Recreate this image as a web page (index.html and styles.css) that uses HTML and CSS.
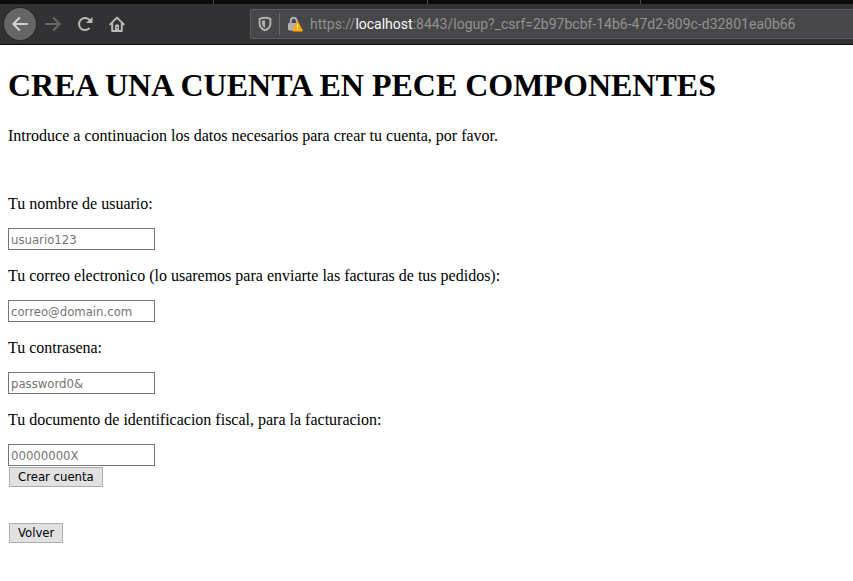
FILE: index.html
```html
<!DOCTYPE html>
<html lang="es">
<head>
<meta charset="utf-8">
<title>Crea una cuenta</title>
<link rel="stylesheet" href="styles.css">
</head>
<body>
<header class="browser">
  <div class="tabs"><span class="tab"></span><span class="tab"></span><span class="tab"></span><span class="tab"></span></div>
  <nav class="toolbar">
    <button class="nav-button nav-back" type="button" aria-label="Back">
      <svg class="icon" viewBox="0 0 16 16"><path d="M15 8H1.5M7.3 2L1.3 8l6 6"/></svg>
    </button>
    <button class="nav-button nav-forward" type="button" aria-label="Forward">
      <svg class="icon" viewBox="0 0 16 16"><path d="M1 8h13.5M8.7 2l6 6-6 6"/></svg>
    </button>
    <button class="nav-button" type="button" aria-label="Reload">
      <svg class="icon" viewBox="0 0 16 16"><path d="M12 12.600A6 6 0 1 1 12.600 4.200"/><path class="solid" d="M15.500 1v5.500a.5.500 0 0 1-.5.500H9z"/></svg>
    </button>
    <button class="nav-button" type="button" aria-label="Home">
      <svg class="icon" viewBox="0 0 16 16"><path d="M1.200 8.400L8 1.600l6.800 6.800M3.200 7.500V15h9.600V7.500"/><path class="solid" fill-rule="evenodd" d="M6 15V9.500q0-1 1-1h2q1 0 1 1V15zM7.500 11v1.200h1.200V11z"/></svg>
    </button>
    <div class="address">
      <svg class="icon shield" viewBox="0 0 16 16"><path d="M8 1.800c2 0 4 .4 5.400 1v4.700c0 3.200-2.200 5.600-5.400 6.900-3.200-1.300-5.400-3.700-5.400-6.900V2.800C4 2.200 6 1.800 8 1.800z"/><path class="solid" d="M8 4.200v7.700C6 10.900 5 9.200 5 7.300V4.700c1-.3 2-.5 3-.5z"/></svg>
      <span class="divider"></span>
      <svg class="icon lock" viewBox="0 0 16 16"><path d="M3.800 8V4.800a3 3 0 0 1 6 0v1"/><path class="solid" d="M2 7h9v7.500H2.500q-1.500 0-1.500-1.500V8q0-1 1-1z"/><path class="warning" d="M10.500 5.300q.6 0 .9.600l4.200 8.200q.5 1.400-.7 1.400H6.100q-1.200 0-.7-1.400l4.200-8.200q.3-.6.9-.6z"/><path class="mark" d="M10.500 8.500v3M10.500 12.800v1.300"/></svg>
      <span class="url">https://<b class="host">localhost</b>:8443/logup?_csrf=2b97bcbf-14b6-47d2-809c-d32801ea0b66</span>
    </div>
  </nav>
</header>
<main class="page">
  <h1 class="title">CREA UNA CUENTA EN PECE COMPONENTES</h1>
  <p class="intro">Introduce a continuacion los datos necesarios para crear tu cuenta, por favor.</p>
  <form class="form">
    <div class="field">
      <label for="user">Tu nombre de usuario:</label>
      <input id="user" type="text" placeholder="usuario123">
    </div>
    <div class="field">
      <label for="mail">Tu correo electronico (lo usaremos para enviarte las facturas de tus pedidos):</label>
      <input id="mail" type="email" placeholder="correo@domain.com">
    </div>
    <div class="field">
      <label for="pass">Tu contrasena:</label>
      <input id="pass" type="password" placeholder="password0&amp;">
    </div>
    <div class="field">
      <label for="nif">Tu documento de identificacion fiscal, para la facturacion:</label>
      <input id="nif" type="text" placeholder="00000000X">
    </div>
    <button class="action" type="submit">Crear cuenta</button>
  </form>
  <button class="action" type="button">Volver</button>
</main>
</body>
</html>
```
FILE: styles.css
```css
body {
  margin: 0;
  background: #fff;
  color: #000;
  font: 16px/20px "Liberation Serif", serif;
}

.browser {
  overflow: hidden;
  border-bottom: 1px solid #0c0c0d;
  background: #323234;
}

.tabs {
  display: grid;
  grid-template-columns: repeat(4, 1fr);
  height: 4px;
  background: #0c0c0d;
}

.tab + .tab {
  border-left: 1px solid #4a4a4f;
}

.toolbar {
  display: flex;
  align-items: center;
  height: 40px;
  padding-left: 4px;
}

.nav-button {
  display: flex;
  flex: none;
  align-items: center;
  justify-content: center;
  width: 32px;
  height: 32px;
  padding: 0;
  border: 0;
  border-radius: 50%;
  background: none;
  color: #b9b9ba;
}

.nav-back {
  margin-right: 1px;
  background: #666667;
  color: #d0d0d0;
  box-shadow: 0 0 0 1px #29292b;
}

.nav-forward {
  color: #68686a;
}

.icon {
  flex: none;
  width: 16px;
  height: 16px;
  fill: none;
  stroke: currentColor;
  stroke-width: 2;
  stroke-linecap: round;
  stroke-linejoin: round;
}

.icon .solid {
  fill: currentColor;
  stroke: none;
}

.icon .warning {
  fill: #ffaa05;
  stroke: none;
}

.icon .mark {
  stroke: #fff;
  stroke-width: 1;
  stroke-linecap: butt;
}

.address {
  display: flex;
  flex: 1;
  align-items: center;
  box-sizing: border-box;
  height: 30px;
  margin-left: 117px;
  padding-left: 6px;
  border: 1px solid #5b5b5e;
  border-right: 0;
  border-radius: 2px 0 0 2px;
  background: #474749;
  color: #b1b1b3;
}

.divider {
  width: 1px;
  height: 22px;
  margin: 0 7px 0 6px;
  background: #66666a;
}

.url {
  margin-left: 7px;
  color: #929293;
  font: 14px/20px Roboto, sans-serif;
  white-space: nowrap;
}

.host {
  color: #f9f9fa;
  font-weight: 400;
}

.page {
  padding: 22px 8px;
}

.title {
  margin: 0 0 22px;
  font-size: 32px;
  line-height: 37px;
}

.intro {
  margin: 0 0 48px;
}

.form {
  margin-bottom: 36px;
}

.field {
  display: flex;
  flex-direction: column;
  align-items: flex-start;
  gap: 14px;
}

.field + .field {
  margin-top: 16px;
}

.field input {
  box-sizing: border-box;
  width: 147px;
  height: 22px;
  padding: 0 2px;
  border: 1px solid #767676;
  background: #fff;
  font: 13px/18px "DejaVu Sans Condensed", "DejaVu Sans", sans-serif;
}

.field input::placeholder {
  color: #757575;
}

.action {
  display: block;
  height: 20px;
  margin: 1px 1px 0;
  padding: 0 8px;
  border: 1px solid #adadad;
  background: #e1e1e1;
  color: #000;
  font: 13px/18px "DejaVu Sans Condensed", "DejaVu Sans", sans-serif;
}
```
